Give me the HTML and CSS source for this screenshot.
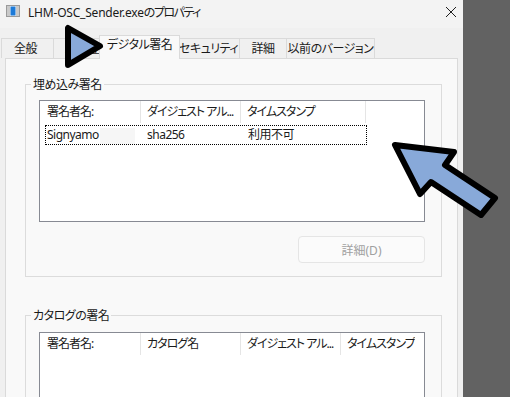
FILE: index.html
```html
<!DOCTYPE html>
<html lang="ja">
<head>
    <meta charset="UTF-8">
    <title>LHM-OSC_Sender.exeのプロパティ</title>
    <link rel="stylesheet" href="styles.css">
</head>
<body>
<div class="screen">
    <div class="dialog">
        <div class="titlebar">
            <svg class="app-icon" width="14" height="12" viewBox="0 0 14 12">
                <rect x="0.5" y="0.5" width="13" height="11" fill="#f4f4f4" stroke="#9a9a9a"/>
                <rect x="1" y="1" width="3" height="10" fill="#c9c9c9"/>
                <rect x="10" y="1" width="3" height="10" fill="#c9c9c9"/>
                <rect x="4.5" y="1.5" width="5" height="9" fill="#1c7ad8"/>
            </svg>
            <span class="title">LHM-OSC_Sender.exe<span class="kana">のプロパティ</span></span>
            <svg class="close" width="12" height="12" viewBox="0 0 12 12">
                <path d="M1 1 L11 11 M11 1 L1 11" stroke="#1f1f1f" stroke-width="1"/>
            </svg>
        </div>

        <div class="tabs">
            <div class="tab tab-general">全般</div>
            <div class="tab tab-compat">互換性</div>
            <div class="tab tab-sign active">デジタル署名</div>
            <div class="tab tab-security">セキュリティ</div>
            <div class="tab tab-details">詳細</div>
            <div class="tab tab-prev">以前のバージョン</div>
        </div>

        <div class="panel">
            <fieldset class="group">
                <legend>埋め込み署名</legend>
                <div class="list">
                    <div class="list-head">
                        <div class="col col-name">署名者名:</div>
                        <div class="col col-mid">ダイジェスト アル...</div>
                        <div class="col col-wide">タイムスタンプ</div>
                    </div>
                    <div class="list-row">
                        <div class="cell cell-name">Signyamo<span class="blur"></span></div>
                        <div class="cell cell-mid">sha256</div>
                        <div class="cell">利用不可</div>
                    </div>
                </div>
                <div class="actions">
                    <button class="btn" disabled>詳細(D)</button>
                </div>
            </fieldset>

            <fieldset class="group catalog">
                <legend>カタログの署名</legend>
                <div class="list list-tall">
                    <div class="list-head">
                        <div class="col col-name">署名者名:</div>
                        <div class="col col-mid">カタログ名</div>
                        <div class="col col-mid">ダイジェスト アル...</div>
                        <div class="col">タイムスタンプ</div>
                    </div>
                </div>
            </fieldset>
        </div>
    </div>
    <div class="backdrop"></div>

    <!-- callout arrows drawn over the screenshot -->
    <svg class="callouts" width="510" height="397" viewBox="0 0 510 397">
        <path d="M68 28 L68 65 L100 46 Z" />
        <path d="M395 145 L454 152 L445 165 L495 198 L481 215 L431 182 L420 194 Z" />
    </svg>
</div>
</body>
</html>
```

FILE: styles.css
```css
body {
    margin: 0;
    font-family: "Noto Sans", "Noto Sans CJK JP", sans-serif;
    font-size: 12px;
    font-feature-settings: "palt" 1;
    letter-spacing: -0.5px;
    color: #1a1a1a;
}
.screen {
    position: relative;
    display: flex;
    width: 510px;
    height: 397px;
    overflow: hidden;
}
.dialog {
    width: 463px;
    background-color: #f0f0f0;
}
.backdrop {
    flex: 1;
    background-color: #626262;
}

/* title bar */
.titlebar {
    display: flex;
    align-items: flex-start;
    height: 28px;
    padding: 5px 6px 0 6px;
    box-sizing: border-box;
    background-color: #f3f3f3;
}
.app-icon {
    flex: none;
}
.title {
    margin-left: 8px;
    line-height: 16px;
    letter-spacing: -0.2px;
}
.title .kana {
    letter-spacing: -1.5px;
}
.close {
    margin-left: auto;
    margin-top: 1px;
}

/* tabs */
.tabs {
    position: relative;
    z-index: 1;
    display: flex;
    align-items: flex-end;
    height: 30px;
    padding-left: 1px;
}
.tab {
    height: 20px;
    line-height: 19px;
    box-sizing: border-box;
    text-align: center;
    border: 1px solid #dadada;
    border-bottom: none;
    background-color: #f0f0f0;
    white-space: nowrap;
}
.tab + .tab {
    border-left: none;
}
.tab.active {
    height: 24px;
    line-height: 18px;
    margin: 0 -2px -1px -2px;
    border-left: 1px solid #dadada;
    background-color: #f9f9f9;
    z-index: 2;
}
.tab-general { width: 53px; padding-right: 4px; }
.tab-compat { width: 47px; padding-left: 10px; }
.tab-sign { width: 81px; }
.tab-security { width: 62px; }
.tab-details { width: 47px; }
.tab-prev { width: 88px; }

/* tab page */
.panel {
    width: 453px;
    height: 340px;
    margin-left: 5px;
    box-sizing: border-box;
    border: 1px solid #dadada;
    background-color: #f9f9f9;
    padding-left: 19px;
}
.group {
    width: 417px;
    box-sizing: border-box;
    margin: 17px 0 0 0;
    padding: 7px 15px 13px 13px;
    border: 1px solid #dcdcdc;
    min-inline-size: 0;
}
.group legend {
    margin-left: -8px;
    padding: 0 2px;
    line-height: 17px;
}
.group.catalog {
    margin-top: 30px;
    padding-top: 8px;
}

/* list views */
.list {
    width: 386px;
    height: 122px;
    box-sizing: border-box;
    border: 1px solid #878a93;
    background-color: #fff;
}
.list-tall {
    height: 90px;
}
.list-head {
    display: flex;
    height: 22px;
}
.col {
    padding-left: 6px;
    line-height: 22px;
    box-sizing: border-box;
    white-space: nowrap;
    overflow: hidden;
    letter-spacing: -1px;
}
.col-name {
    width: 101px;
    padding-left: 7px;
    border-right: 1px solid #e5e5e5;
}
.col-mid {
    width: 100px;
    border-right: 1px solid #e5e5e5;
}
.col-wide {
    width: 125px;
    border-right: 1px solid #e5e5e5;
}
.list-row {
    display: flex;
    width: 322px;
    height: 20px;
    margin: 2px 0 0 5px;
    box-sizing: border-box;
    border: 1px dotted #000;
}
.cell {
    padding-left: 6px;
    line-height: 18px;
    white-space: nowrap;
}
.cell-name {
    width: 95px;
    padding-left: 1px;
    box-sizing: border-box;
}
.cell-mid {
    width: 101px;
    box-sizing: border-box;
}
.blur {
    display: inline-block;
    width: 35px;
    height: 16px;
    margin-left: 1px;
    vertical-align: middle;
    background-color: #f6f6f6;
}

/* buttons */
.actions {
    display: flex;
    justify-content: flex-end;
    margin-top: 14px;
    margin-right: 1px;
}
.btn {
    width: 127px;
    height: 27px;
    font-family: inherit;
    font-size: 12px;
    font-feature-settings: "palt" 1;
    color: #a0a0a0;
    background-color: #fbfbfb;
    border: 1px solid #e5e5e5;
    border-radius: 4px;
}

/* overlay arrows */
.callouts {
    position: absolute;
    left: 0;
    top: 0;
    z-index: 10;
    pointer-events: none;
}
.callouts path {
    fill: #88a9d9;
    stroke: #000;
    stroke-width: 6;
    stroke-linejoin: round;
}
```
